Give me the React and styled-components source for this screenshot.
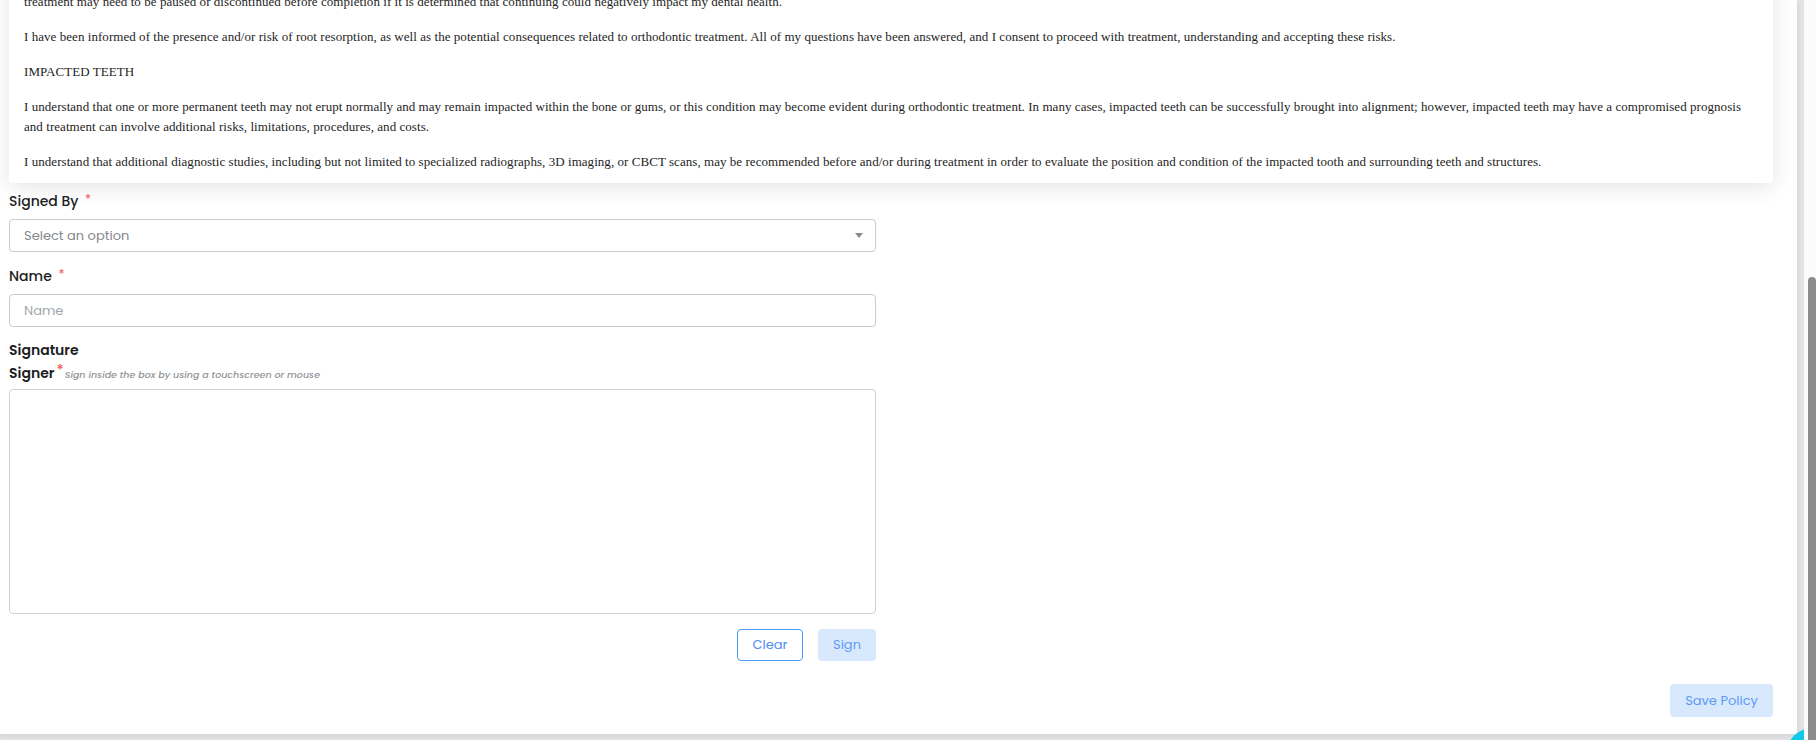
import React, { useState } from 'react';
import styled, { createGlobalStyle } from 'styled-components';

const Global = createGlobalStyle`
  html, body {
    margin: 0;
    padding: 0;
    height: 100%;
    overflow: hidden;
  }
  body {
    font-family: "Poppins", "Open Sans", sans-serif;
    color: #212529;
  }
  * {
    box-sizing: border-box;
  }
`;

const paragraphs = [
  'treatment may need to be paused or discontinued before completion if it is determined that continuing could negatively impact my dental health.',
  'I have been informed of the presence and/or risk of root resorption, as well as the potential consequences related to orthodontic treatment. All of my questions have been answered, and I consent to proceed with treatment, understanding and accepting these risks.',
  'IMPACTED TEETH',
  'I understand that one or more permanent teeth may not erupt normally and may remain impacted within the bone or gums, or this condition may become evident during orthodontic treatment. In many cases, impacted teeth can be successfully brought into alignment; however, impacted teeth may have a compromised prognosis and treatment can involve additional risks, limitations, procedures, and costs.',
  'I understand that additional diagnostic studies, including but not limited to specialized radiographs, 3D imaging, or CBCT scans, may be recommended before and/or during treatment in order to evaluate the position and condition of the impacted tooth and surrounding teeth and structures.',
];

const App = () => {
  const [form, setForm] = useState({ signedBy: '', name: '' });

  const handleChange = e => {
    const { name, value } = e.target;
    setForm(f => ({ ...f, [name]: value }));
  };

  return (
    <>
      <Global />
      <Screen>
        <Main>
          <PolicyCard>
            {paragraphs.map((p, i) => (
              <Paragraph key={i}>{p}</Paragraph>
            ))}
          </PolicyCard>

          <FormColumn>
            <Field>
              <Label>
                Signed By <Required>*</Required>
              </Label>
              <SelectBox>
                <SelectText>Select an option</SelectText>
                <Caret />
              </SelectBox>
            </Field>

            <Field>
              <Label>
                Name <Required>*</Required>
              </Label>
              <TextInput
                name="name"
                placeholder="Name"
                value={form.name}
                onChange={handleChange}
              />
            </Field>

            <SectionTitle>Signature</SectionTitle>
            <SignerLabel>
              Signer<Required $tight>*</Required>
              <Hint>Sign inside the box by using a touchscreen or mouse</Hint>
            </SignerLabel>
            <SignaturePad />

            <PadActions>
              <OutlineButton type="button">Clear</OutlineButton>
              <SoftButton type="button">Sign</SoftButton>
            </PadActions>
          </FormColumn>

          <Footer>
            <SoftButton type="button" $wide>Save Policy</SoftButton>
          </Footer>
        </Main>

        <ScrollTrack>
          <ScrollThumb />
        </ScrollTrack>

        <ChatBubble />
      </Screen>
    </>
  );
};

const Screen = styled.div`
  display: flex;
  gap: 7px;
  width: 1816px;
  height: 740px;
  background: #e3e3e5;
  overflow: hidden;
`;

const Main = styled.main`
  width: 1797px;
  height: 734px;
  background: #fff;
  display: flex;
  flex-direction: column;
  justify-content: flex-end;
  overflow: hidden;
  padding: 0 24px 17px 9px;
  box-shadow: 0 2px 6px rgba(0, 0, 0, 0.08);

  & > * {
    flex-shrink: 0;
  }
`;

const PolicyCard = styled.section`
  background: #fff;
  border-radius: 4px;
  padding: 20px 15px 11px 15px;
  box-shadow: 0 4px 22px rgba(0, 0, 0, 0.11);
  font-family: "Liberation Serif", "Times New Roman", serif;
  font-size: 13px;
  letter-spacing: 0.05px;
  line-height: 20px;
  color: #1e1e1e;
`;

const Paragraph = styled.p`
  margin: 0 0 15px;

  &:last-child {
    margin-bottom: 0;
  }
`;

const FormColumn = styled.div`
  width: 867px;
  margin-top: 8px;
  display: flex;
  flex-direction: column;
`;

const Field = styled.div`
  display: flex;
  flex-direction: column;
  margin-bottom: 14px;

  &:nth-child(2) {
    margin-bottom: 13px;
  }
`;

const Label = styled.label`
  font-size: 14px;
  font-weight: 500;
  line-height: 21px;
  color: #1d1d1f;
  margin-bottom: 7px;
`;

const Required = styled.span`
  color: #f26b6b;
  font-size: ${p => (p.$tight ? '14px' : '12px')};
  margin-left: ${p => (p.$tight ? '2px' : '3px')};
  position: relative;
  top: -3px;
`;

const SelectBox = styled.div`
  height: 33px;
  border: 1px solid #c9ccd1;
  border-radius: 4px;
  display: flex;
  align-items: center;
  justify-content: space-between;
  padding: 0 12px 0 14px;
`;

const SelectText = styled.span`
  font-size: 13px;
  color: #85878b;
`;

const Caret = styled.span`
  width: 0;
  height: 0;
  border-left: 4px solid transparent;
  border-right: 4px solid transparent;
  border-top: 5px solid #8a8a8a;
`;

const TextInput = styled.input`
  height: 33px;
  border: 1px solid #c9ccd1;
  border-radius: 4px;
  padding: 0 14px;
  font-family: inherit;
  font-size: 13px;
  color: #333;
  outline: none;

  &::placeholder {
    color: #a3a6ab;
  }
`;

const SectionTitle = styled.div`
  font-size: 14px;
  font-weight: 600;
  line-height: 21px;
  color: #1d1d1f;
  margin-bottom: 2px;
`;

const SignerLabel = styled.div`
  font-size: 14px;
  font-weight: 600;
  line-height: 21px;
  color: #1d1d1f;
  margin-bottom: 4px;
  display: flex;
  align-items: baseline;
`;

const Hint = styled.span`
  font-size: 9.5px;
  font-style: italic;
  font-weight: 500;
  color: #929498;
  margin-left: 1px;
`;

const SignaturePad = styled.div`
  height: 225px;
  border: 1px solid #cfd0d3;
  border-radius: 4px;
  background: #fff;
`;

const PadActions = styled.div`
  display: flex;
  justify-content: flex-end;
  gap: 15px;
  margin-top: 15px;
`;

const OutlineButton = styled.button`
  height: 32px;
  min-width: 66px;
  padding: 0 12px;
  border: 1px solid #4d9bf6;
  border-radius: 4px;
  background: #fff;
  color: #4f8df5;
  font-family: inherit;
  font-size: 13px;
  cursor: pointer;
`;

const SoftButton = styled.button`
  height: ${p => (p.$wide ? '33px' : '32px')};
  min-width: ${p => (p.$wide ? '103px' : '58px')};
  padding: 0 12px;
  border: none;
  border-radius: 4px;
  background: #d9e9fd;
  color: #5d99f4;
  font-family: inherit;
  font-size: 13px;
  cursor: default;
`;

const Footer = styled.div`
  display: flex;
  justify-content: flex-end;
  margin-top: 23px;
`;

const ScrollTrack = styled.div`
  position: relative;
  z-index: 2;
  width: 12px;
  background: #fbfbfb;
  display: flex;
  flex-direction: column;
  padding: 277px 0 0 4px;
`;

const ScrollThumb = styled.div`
  flex: 1;
  background: #8c8c8c;
  border-radius: 4px 4px 0 0;
`;

const ChatBubble = styled.div`
  position: fixed;
  z-index: 1;
  left: 1787px;
  top: 728px;
  width: 50px;
  height: 50px;
  border-radius: 50%;
  background: #12c8e9;
`;

export default App;
